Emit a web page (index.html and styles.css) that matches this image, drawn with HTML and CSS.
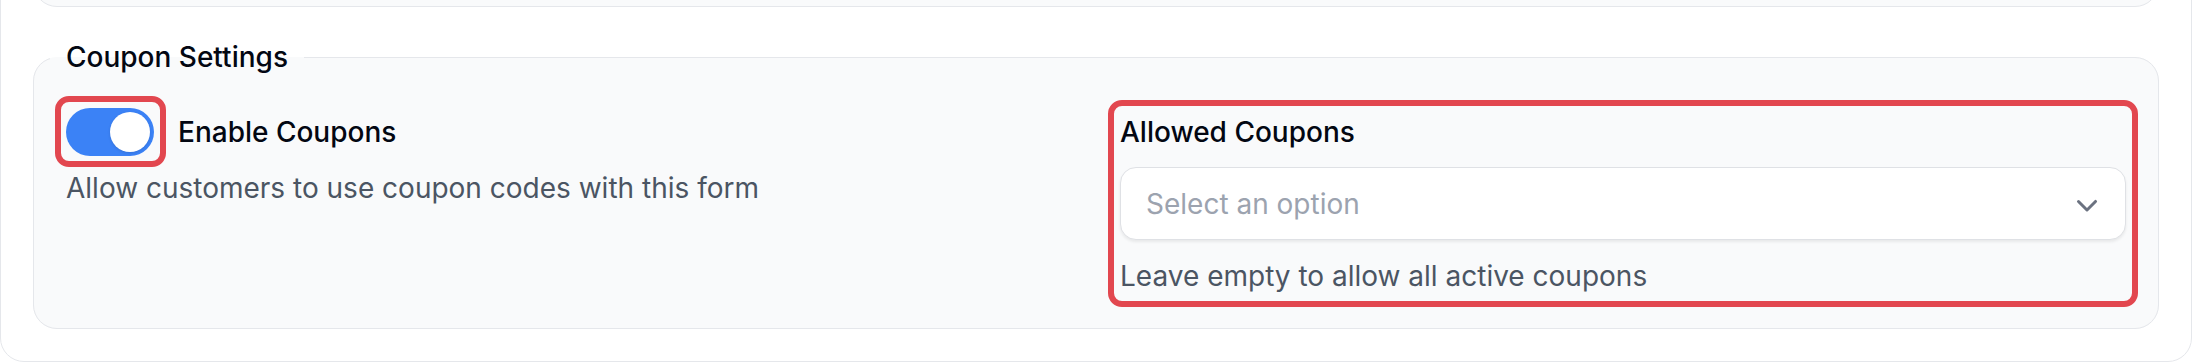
FILE: index.html
```html
<!DOCTYPE html>
<html>
<head>
	<title>Coupon Settings</title>
	<meta name="viewport" content="width=device-width, initial-scale=1">
	<link rel="stylesheet" href="styles.css">
</head>
<body>
	<div class="card">
		<div class="prev-section"></div>

		<fieldset class="fieldset">
			<legend class="legend">Coupon Settings</legend>

			<div class="fields">
				<div class="field">
					<div class="toggle-row">
						<span class="toggle-wrap marked">
							<button class="toggle is-on" type="button" aria-pressed="true"><span class="knob"></span></button>
						</span>
						<span class="field-label">Enable Coupons</span>
					</div>
					<p class="help help-toggle">Allow customers to use coupon codes with this form</p>
				</div>

				<div class="field marked">
					<label class="field-label">Allowed Coupons</label>
					<div class="select">
						<span class="placeholder">Select an option</span>
						<svg class="chevron" viewBox="0 0 20 20" fill="currentColor" aria-hidden="true">
							<path fill-rule="evenodd" d="M5.22 8.22a.75.75 0 0 1 1.06 0L10 11.94l3.72-3.72a.75.75 0 1 1 1.06 1.06l-4.25 4.25a.75.75 0 0 1-1.06 0L5.22 9.28a.75.75 0 0 1 0-1.06Z" clip-rule="evenodd"/>
						</svg>
					</div>
					<p class="help help-select">Leave empty to allow all active coupons</p>
				</div>
			</div>
		</fieldset>
	</div>
</body>
</html>
```

FILE: styles.css
```css
body {
  margin: 0;
  background: #ffffff;
  font-family: 'Inter', 'Noto Sans', sans-serif;
  color: #030712;
  overflow: hidden;
}

/* outer section card, top is scrolled out of view */
.card {
  margin-top: -60px;
  border: 1px solid #e5e7eb;
  border-radius: 24px;
  background: #ffffff;
  padding: 0 32px 32px;
  display: flex;
  flex-direction: column;
  gap: 26px;
}

.prev-section {
  height: 66px;
  box-sizing: border-box;
  border: 1px solid #e5e7eb;
  border-radius: 24px;
  background: #f9fafb;
}

.fieldset {
  margin: 0;
  min-width: 0;
  border: 1px solid #e5e7eb;
  border-radius: 24px;
  background: #f9fafb;
  padding: 27px 32px 32px;
}

.legend {
  margin-left: -16px;
  padding: 0 16px;
  font-size: 28px;
  font-weight: 500;
  line-height: 48px;
}

.fields {
  display: grid;
  grid-template-columns: 1fr 1fr;
  column-gap: 48px;
  align-items: start;
}

.field {
  display: flex;
  flex-direction: column;
  position: relative;
}

.toggle-row {
  display: flex;
  align-items: center;
  gap: 24px;
  height: 48px;
}

.field-label {
  font-size: 28px;
  font-weight: 500;
  line-height: 48px;
  color: #030712;
}

.toggle-wrap {
  position: relative;
  display: inline-flex;
}

.toggle {
  width: 88px;
  height: 48px;
  border: none;
  padding: 4px;
  border-radius: 999px;
  background: #e5e7eb;
  display: flex;
  cursor: pointer;
}

.toggle.is-on {
  background: #3b82f6;
  justify-content: flex-end;
}

.knob {
  width: 40px;
  height: 40px;
  border-radius: 50%;
  background: #ffffff;
  box-shadow: 0 1px 3px rgba(0, 0, 0, 0.12);
}

.help {
  margin: 0;
  font-size: 28px;
  line-height: 40px;
  color: #4b5563;
}

.help-toggle {
  margin-top: 12px;
}

.help-select {
  margin-top: 16px;
}

.select {
  margin-top: 11px;
  height: 73px;
  box-sizing: border-box;
  background: #ffffff;
  border: 1px solid #dfe1e5;
  border-radius: 16px;
  box-shadow: 0 2px 3px rgba(0, 0, 0, 0.07);
  display: flex;
  align-items: center;
  justify-content: space-between;
  padding: 0 18px 0 25px;
}

.placeholder {
  font-size: 28px;
  color: #9ca3af;
}

.chevron {
  width: 40px;
  height: 40px;
  color: #6b7280;
}

/* red annotation boxes drawn over the screenshot */
.marked::after {
  content: "";
  position: absolute;
  border: 6px solid #e2474f;
  border-radius: 14px;
  pointer-events: none;
}

.toggle-wrap.marked::after {
  top: -12px;
  left: -11px;
  right: -12px;
  bottom: -11px;
}

.field.marked::after {
  top: -8px;
  left: -12px;
  right: -12px;
  bottom: -11px;
}
```
